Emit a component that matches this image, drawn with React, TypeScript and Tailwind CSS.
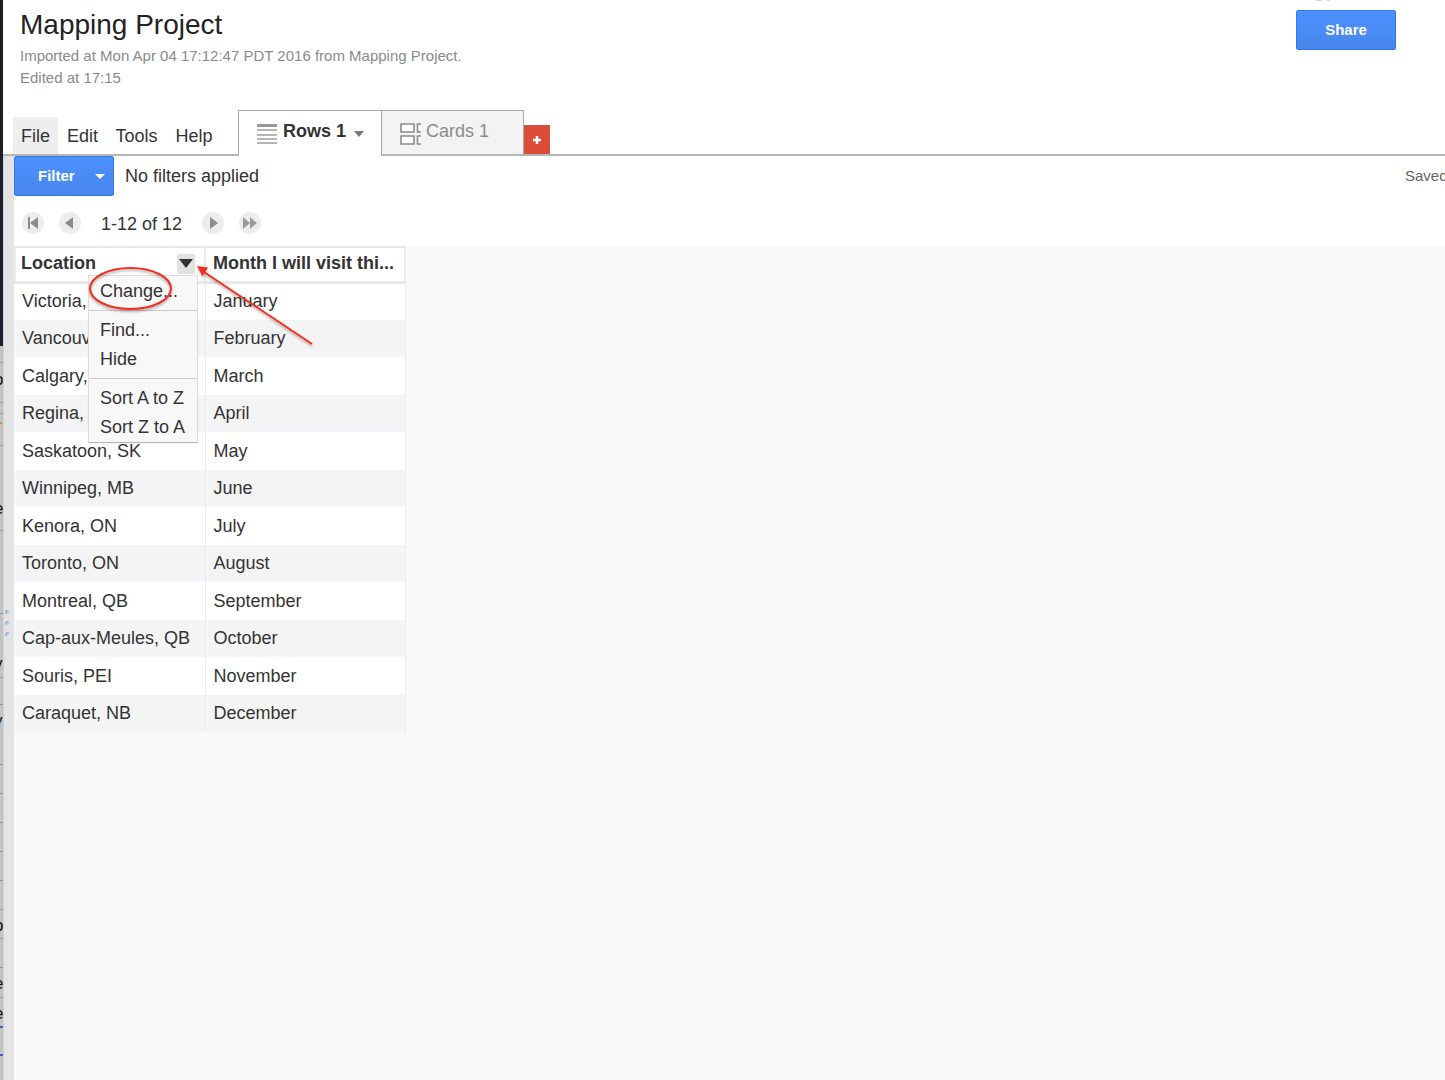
import React from "react";

const rows = [
  ["Victoria, BC", "January"],
  ["Vancouver, BC", "February"],
  ["Calgary, AB", "March"],
  ["Regina, SK", "April"],
  ["Saskatoon, SK", "May"],
  ["Winnipeg, MB", "June"],
  ["Kenora, ON", "July"],
  ["Toronto, ON", "August"],
  ["Montreal, QB", "September"],
  ["Cap-aux-Meules, QB", "October"],
  ["Souris, PEI", "November"],
  ["Caraquet, NB", "December"],
];

const blueButton =
  "h-10 w-[100px] rounded-xs border border-[#3079ed] bg-linear-to-b from-[#4d90fe] to-[#4787ed] font-bold text-white";

function PageButton({ label, children }: { label: string; children: React.ReactNode }) {
  return (
    <button type="button" aria-label={label} className="flex size-[22px] items-center justify-center rounded-full bg-[#ededed]">
      <svg viewBox="0 0 22 22" className="size-[22px]" fill="#8c8c8c">
        {children}
      </svg>
    </button>
  );
}

function Header() {
  return (
    <header className="flex h-[110px] justify-between pl-[17px] pr-[49px]">
      <div>
        <h1 className="pt-[7px] text-[28px] leading-9 text-[#222]">Mapping Project</h1>
        <p className="pt-[2px] text-[15px] leading-[22px] text-[#8a8a8a]">
          Imported at Mon Apr 04 17:12:47 PDT 2016 from Mapping Project.
          <br />
          Edited at 17:15
        </p>
      </div>
      <div className="flex flex-col">
        <svg viewBox="0 0 100 10" className="h-[10px] w-[100px]" fill="none" stroke="#a8a8a8">
          <path d="M20 0h6M31 0h3" />
        </svg>
        <button type="button" className={blueButton + " text-[15px]"}>
          Share
        </button>
      </div>
    </header>
  );
}

function TabBar() {
  return (
    <div className="flex h-[46px] text-[18px] text-[#333]">
      <nav className="flex w-[235px] items-end border-b-2 border-[#b7b7b7] pl-[10px]">
        <button type="button" className="h-[37px] w-[45px] bg-[#eee] pt-px">File</button>
        <button type="button" className="h-[37px] w-[49px] pt-px">Edit</button>
        <button type="button" className="h-[37px] w-[59px] pt-px">Tools</button>
        <button type="button" className="h-[37px] w-[56px] pt-px">Help</button>
      </nav>
      <button type="button" className="flex w-[143px] items-center border-t border-l border-[#a9a9a9] pb-[4px] pl-[18px] font-bold">
        <svg viewBox="0 0 20 20" className="mt-1 mr-[6px] h-5 w-5" fill="#b4b4b4">
          <path d="M0 0h20v3H0z" fill="#999" />
          <path d="M0 5h20v2H0zM0 10h20v2H0zM0 14h20v2H0zM0 18h20v2H0z" />
        </svg>
        Rows 1
        <svg viewBox="0 0 10 6" className="mt-[5px] ml-2 h-[6px] w-[10px]" fill="#777">
          <path d="M0 0h10L5 6z" />
        </svg>
      </button>
      <button type="button" className="flex w-[143px] items-center border-x border-t border-b-2 border-[#a9a9a9] border-b-[#b7b7b7] bg-[#f3f3f3] pb-[2px] pl-[18px] text-[#8c8c8c]">
        <svg viewBox="0 0 21 22" className="mt-[5px] mr-[5px] h-[22px] w-[21px]" fill="#fff" stroke="#8c8c8c" strokeWidth="1.6">
          <path d="M1 1h13v8H1zM1 13h13v8H1z" />
          <path d="M21 1h-3.500v8H21M21 13h-3.500v8H21" />
        </svg>
        Cards 1
      </button>
      <div className="flex flex-1 items-end border-b-2 border-[#b7b7b7]">
        <button type="button" aria-label="Add tab" className="flex h-[29px] w-[26px] items-center justify-center border border-b-0 border-[#c8574a] bg-[#dd4b39]">
          <svg viewBox="0 0 8 8" className="size-2" stroke="#fff" strokeWidth="2.500">
            <path d="M4 0v8M0 4h8" />
          </svg>
        </button>
      </div>
    </div>
  );
}

function Menu() {
  const item = "block h-[29px] w-full pl-[11px] text-left";
  return (
    <div className="absolute top-[29px] left-[74px] z-10 w-[110px] border border-[#ddd] border-b-[#b5b5b5] bg-[#f8f8f8] pb-px text-[18px] text-[#333] shadow-xs">
      <button type="button" className={item + " pt-px"}>Change...</button>
      <div className="my-[5px] h-px bg-[#ccc]" />
      <button type="button" className={item}>Find...</button>
      <button type="button" className={item}>Hide</button>
      <div className="my-[4px] h-px bg-[#ccc]" />
      <button type="button" className={item + " pt-px"}>Sort A to Z</button>
      <button type="button" className={item + " pt-px"}>Sort Z to A</button>
    </div>
  );
}

function Annotation() {
  return (
    <svg
      viewBox="0 0 240 90"
      className="pointer-events-none absolute top-[16px] left-[70px] z-20 h-[90px] w-[240px] drop-shadow-[0_2px_1px_rgba(0,0,0,0.3)]"
      fill="none"
      stroke="#f52d1c"
      strokeWidth="2"
    >
      <ellipse cx="46.500" cy="26.500" rx="40.500" ry="20.500" />
      <path d="M120 10L228 82" />
      <path d="M113 4l11 1.500-5.500 8.500z" fill="#f52d1c" stroke="none" />
    </svg>
  );
}

function DataTable() {
  return (
    <div className="relative w-[392px]">
      <table className="w-full table-fixed border-collapse text-left text-[18px] text-[#333]">
        <colgroup>
          <col className="w-[190px]" />
          <col />
        </colgroup>
        <thead>
          <tr className="h-[35px] border-t-2 border-b-3 border-[#e8e8e8] bg-white">
            <th className="border-x-2 border-[#ececec] pt-0 pr-[9px] pb-px pl-[5px]">
              <div className="flex items-center justify-between">
                Location
                <button type="button" aria-label="Location column menu" className="flex h-5 w-[18px] items-center justify-center bg-[#e2e2e2]">
                  <svg viewBox="0 0 14 9" className="h-[9px] w-[14px]" fill="#333">
                    <path d="M0 0h14L7 9z" />
                  </svg>
                </button>
              </div>
            </th>
            <th className="truncate border-r-2 border-[#ececec] pt-0 pb-px pl-[7px]">Month I will visit thi...</th>
          </tr>
        </thead>
        <tbody>
          {rows.map(([place, month], i) => (
            <tr
              key={place}
              className={
                i % 2
                  ? "h-[37px] bg-[#f4f4f5] *:shadow-[inset_3px_0_#f3f6fa,inset_0_-2px_#f3f6fa]"
                  : "h-[38px] bg-white"
              }
            >
              <td className="border-r border-[#e9ebee] py-0 pl-[7px] whitespace-nowrap">{place}</td>
              <td className="border-r border-[#e9ebee] py-0 pl-2">{month}</td>
            </tr>
          ))}
        </tbody>
      </table>
      <Menu />
      <Annotation />
    </div>
  );
}

const sheetLines = [16, 56, 67, 99, 184, 267, 331, 358, 418, 447, 476, 505, 534, 563, 592, 621, 651];

const scraps = [
  { y: 39, text: "o" },
  { y: 168, text: "e" },
  { y: 323, text: "v" },
  { y: 380, text: "y" },
  { y: 585, text: "o" },
  { y: 643, text: "e" },
  { y: 673, text: "e" },
];

function BackgroundWindow() {
  return (
    <div className="flex w-[3px] shrink-0 flex-col overflow-hidden">
      <div className="h-[346px] bg-[#1c1e29]" />
      <svg className="w-[3px] flex-1 bg-[#c3c3c3]">
        {sheetLines.map((y) => (
          <path key={y} d={`M0 ${y}h3v1H0z`} fill="#969696" />
        ))}
        {scraps.map((s) => (
          <text key={s.y} x="-6" y={s.y} fontSize="17" fill="#111">
            {s.text}
          </text>
        ))}
        <path d="M0 76h2v2H0z" fill="#e08a20" />
        <path d="M0 680h3v2H0zM0 708h3v2H0z" fill="#3566c8" />
      </svg>
    </div>
  );
}

export default function App() {
  const grip = "size-[5px] rounded-full bg-linear-to-br from-[#6f93c8] to-white";
  return (
    <div className="flex min-h-screen overflow-hidden bg-white font-['Liberation_Sans',Arial,sans-serif]">
      <BackgroundWindow />
      <div className="flex min-w-0 flex-1 flex-col">
        <Header />
        <TabBar />
        <div className="flex flex-1">
          <div className="flex w-[11px] shrink-0 flex-col gap-[6px] border-l border-[#d2d2d2] bg-[#e4e4e4] pt-[454px] pl-px">
            <span className={grip} />
            <span className={grip} />
            <span className={grip} />
          </div>
          <main className="flex min-w-0 flex-1 flex-col">
            <div className="flex h-10 items-center text-[18px] text-[#333]">
              <button type="button" className={blueButton + " flex items-center pl-[23px] text-[15px]"}>
                Filter
                <svg viewBox="0 0 10 5" className="ml-5 h-[5px] w-[10px]" fill="#fff">
                  <path d="M0 0h10L5 5z" />
                </svg>
              </button>
              <span className="ml-[11px]">No filters applied</span>
              <span className="ml-auto w-10 overflow-hidden pt-px text-[15px] whitespace-nowrap text-[#666]">Saved</span>
            </div>
            <div className="flex h-[50px] items-center pt-[5px] pl-2 text-[18px] text-[#333]">
              <div className="flex gap-[15px] pb-[2px]">
                <PageButton label="First page">
                  <path d="M6 5h2v12H6zM16 5v12l-8-6z" />
                </PageButton>
                <PageButton label="Previous page">
                  <path d="M14 5v12l-8-6z" />
                </PageButton>
              </div>
              <span className="mx-5 pt-px">1-12 of 12</span>
              <div className="flex gap-[15px] pb-[2px]">
                <PageButton label="Next page">
                  <path d="M8 5v12l8-6z" />
                </PageButton>
                <PageButton label="Last page">
                  <path d="M4 5v12l7-6zM11 5v12l7-6z" fill="#9b9b9b" />
                </PageButton>
              </div>
            </div>
            <div className="flex-1 bg-[#fafafa]">
              <DataTable />
            </div>
          </main>
        </div>
      </div>
    </div>
  );
}
